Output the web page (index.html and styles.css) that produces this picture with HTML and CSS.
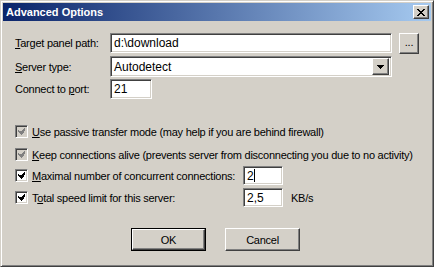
FILE: index.html
```html
<!DOCTYPE html>
<html lang="en">
<head>
  <meta charset="UTF-8">
  <title>Advanced Options</title>
  <link rel="stylesheet" href="styles.css">
</head>
<body>
  <div class="window">
    <div class="titlebar">
      <span class="title">Advanced Options</span>
      <span class="raised close-btn">
        <svg width="8" height="7" viewBox="0 0 8 7" shape-rendering="crispEdges">
          <path d="M0 0h2v1h-2zM6 0h2v1h-2zM1 1h2v1h-2zM5 1h2v1h-2zM2 2h4v1h-4zM3 3h2v1h-2zM2 4h4v1h-4zM1 5h2v1h-2zM5 5h2v1h-2zM0 6h2v1h-2zM6 6h2v1h-2z" fill="#000"/>
        </svg>
      </span>
    </div>

    <div class="content">
      <div class="row row-path">
        <span class="label"><u>T</u>arget panel path:</span>
        <div class="edit edit-path">d:\download</div>
        <span class="raised browse-btn">...</span>
      </div>

      <div class="row row-server">
        <span class="label"><u>S</u>erver type:</span>
        <div class="edit combo">
          <span class="combo-text">Autodetect</span>
          <span class="raised combo-btn">
            <svg width="7" height="4" viewBox="0 0 7 4" shape-rendering="crispEdges">
              <path d="M0 0h7v1h-7zM1 1h5v1h-5zM2 2h3v1h-3zM3 3h1v1h-1z" fill="#000"/>
            </svg>
          </span>
        </div>
      </div>

      <div class="row row-port">
        <span class="label">Connect to <u>p</u>ort:</span>
        <div class="edit edit-port">21</div>
      </div>

      <div class="row check-row row-passive">
        <span class="checkbox grayed">
          <svg width="7" height="7" viewBox="0 0 7 7" shape-rendering="crispEdges"><path d="M6 0h1v3h-1zM5 1h1v4h-1zM4 2h1v4h-1zM3 3h1v4h-1zM2 3h1v3h-1zM1 3h1v2h-1zM0 2h1v2h-1z"/></svg>
        </span>
        <span class="check-label"><u>U</u>se passive transfer mode (may help if you are behind firewall)</span>
      </div>

      <div class="row check-row row-alive">
        <span class="checkbox grayed">
          <svg width="7" height="7" viewBox="0 0 7 7" shape-rendering="crispEdges"><path d="M6 0h1v3h-1zM5 1h1v4h-1zM4 2h1v4h-1zM3 3h1v4h-1zM2 3h1v3h-1zM1 3h1v2h-1zM0 2h1v2h-1z"/></svg>
        </span>
        <span class="check-label"><u>K</u>eep connections alive (prevents server from disconnecting you due to no activity)</span>
      </div>

      <div class="row check-row row-max">
        <span class="checkbox">
          <svg width="7" height="7" viewBox="0 0 7 7" shape-rendering="crispEdges"><path d="M6 0h1v3h-1zM5 1h1v4h-1zM4 2h1v4h-1zM3 3h1v4h-1zM2 3h1v3h-1zM1 3h1v2h-1zM0 2h1v2h-1z"/></svg>
        </span>
        <span class="check-label fixed"><u>M</u>aximal number of concurrent connections:</span>
        <div class="edit edit-num">2<span class="caret"></span></div>
      </div>

      <div class="row check-row row-speed">
        <span class="checkbox">
          <svg width="7" height="7" viewBox="0 0 7 7" shape-rendering="crispEdges"><path d="M6 0h1v3h-1zM5 1h1v4h-1zM4 2h1v4h-1zM3 3h1v4h-1zM2 3h1v3h-1zM1 3h1v2h-1zM0 2h1v2h-1z"/></svg>
        </span>
        <span class="check-label fixed">T<u>o</u>tal speed limit for this server:</span>
        <div class="edit edit-num">2,5</div>
        <span class="unit">KB/s</span>
      </div>

      <div class="buttons">
        <span class="default-frame"><span class="raised push-btn">OK</span></span>
        <span class="raised push-btn">Cancel</span>
      </div>
    </div>
  </div>
</body>
</html>
```

FILE: styles.css
```css
* {
  margin: 0;
  padding: 0;
  box-sizing: border-box;
}

body {
  font-family: "Liberation Sans", Arial, sans-serif;
  font-size: 11px;
  letter-spacing: -0.25px;
  color: #000;
  background: #d4d0c8;
}

u {
  text-decoration: underline;
  text-underline-offset: 1px;
}

.window {
  width: 434px;
  height: 267px;
  background: #d4d0c8;
  border: 1px solid;
  border-color: #d4d0c8 #404040 #404040 #d4d0c8;
  box-shadow: inset 1px 1px #fff, inset -1px -1px #808080;
  padding: 2px;
}

.titlebar {
  height: 18px;
  display: flex;
  align-items: center;
  justify-content: space-between;
  padding: 0 2px 0 2px;
  background: linear-gradient(to right, #0a246a, #a6caf0);
}

.title {
  color: #fff;
  font-weight: bold;
  font-size: 11px;
  letter-spacing: 0;
  padding-left: 1px;
}

.raised {
  background: #d4d0c8;
  border: 1px solid;
  border-color: #fff #404040 #404040 #fff;
  box-shadow: inset -1px -1px #808080;
  display: flex;
  align-items: center;
  justify-content: center;
}

.close-btn {
  width: 16px;
  height: 14px;
}

.close-btn svg {
  display: block;
}

.content {
  padding-left: 12px;
}

.row {
  display: flex;
  align-items: center;
}

.label {
  width: 95px;
  flex-shrink: 0;
}

.edit {
  background: #fff;
  border: 1px solid;
  border-color: #808080 #fff #fff #808080;
  box-shadow: inset 1px 1px #404040, inset -1px -1px #d4d0c8;
  height: 100%;
  display: flex;
  align-items: center;
  padding-left: 3px;
  font-size: 12px;
  letter-spacing: 0;
}

.row-path {
  margin-top: 12px;
  height: 20px;
}

.edit-path {
  width: 282px;
}

.browse-btn {
  width: 20px;
  height: 21px;
  margin-left: 7px;
  padding-bottom: 3px;
}

.row-server {
  margin-top: 3px;
  height: 21px;
}

.combo {
  width: 282px;
  padding: 2px 2px 2px 3px;
  justify-content: space-between;
}

.combo-btn {
  width: 17px;
  height: 17px;
}

.row-port {
  margin-top: 2px;
  height: 20px;
}

.edit-port {
  width: 42px;
}

.check-row {
  height: 19px;
}

.checkbox {
  width: 13px;
  height: 13px;
  flex-shrink: 0;
  background: #fff;
  border: 1px solid;
  border-color: #808080 #fff #fff #808080;
  box-shadow: inset 1px 1px #404040, inset -1px -1px #d4d0c8;
  display: flex;
  align-items: center;
  justify-content: center;
}

.checkbox svg {
  fill: #000;
  display: block;
}

.checkbox.grayed {
  background: #d4d0c8;
}

.checkbox.grayed svg {
  fill: #808080;
}

.check-label {
  margin-left: 4px;
  white-space: nowrap;
}

.check-label.fixed {
  width: 211px;
}

.row-passive {
  margin-top: 23px;
}

.row-alive {
  margin-top: 4px;
}

.row-max {
  margin-top: 2px;
}

.row-speed {
  margin-top: 3px;
}

.edit-num {
  width: 40px;
}

.caret {
  display: inline-block;
  width: 1px;
  height: 13px;
  background: #000;
}

.unit {
  margin-left: 8px;
}

.buttons {
  display: flex;
  gap: 19px;
  margin-top: 21px;
  padding-left: 116px;
}

.default-frame {
  display: flex;
  border: 1px solid #000;
}

.push-btn {
  width: 75px;
  height: 23px;
}

.default-frame .push-btn {
  width: 73px;
  height: 21px;
}
```
